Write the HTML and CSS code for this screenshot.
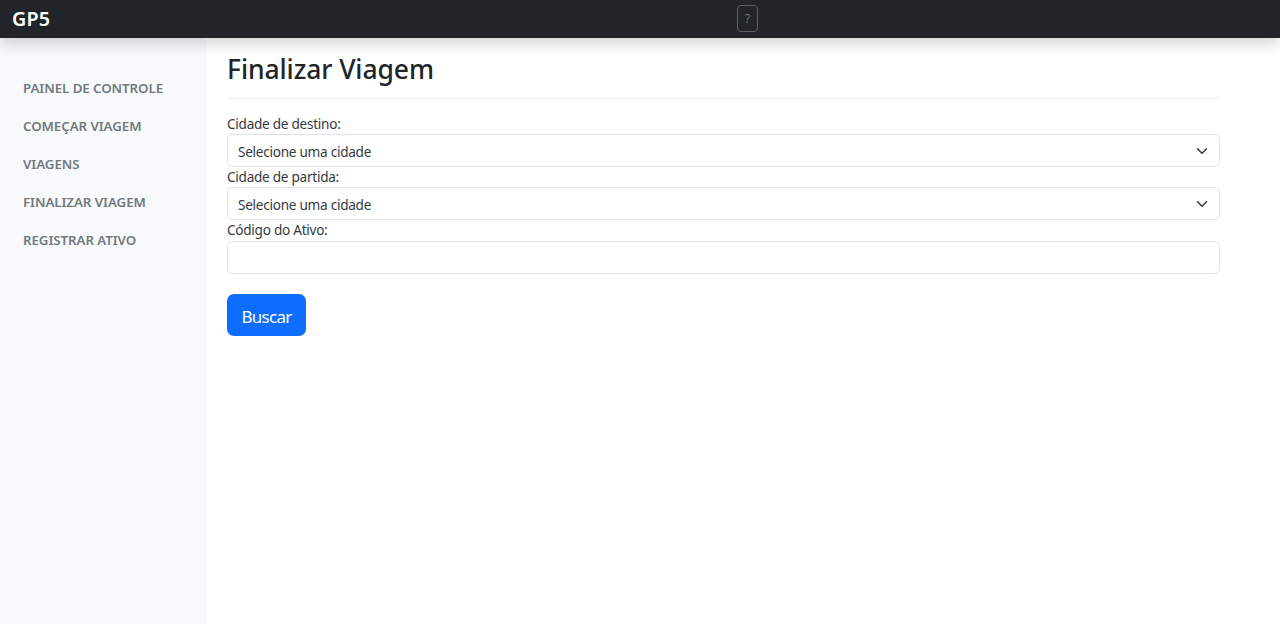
FILE: index.html
```html
<!DOCTYPE html>
<html lang="pt-BR">
<head>
<meta charset="utf-8">
<title>Finalizar Viagem</title>
<link rel="stylesheet" href="styles.css">
</head>
<body>
<header class="navbar">
  <a class="brand">GP5</a>
  <button class="help" type="button">?</button>
</header>
<div class="layout">
  <nav class="sidebar">
    <a class="nav-link">Painel de controle</a>
    <a class="nav-link">Começar viagem</a>
    <a class="nav-link">Viagens</a>
    <a class="nav-link">Finalizar viagem</a>
    <a class="nav-link">Registrar ativo</a>
  </nav>
  <main class="content">
    <div class="heading"><h1>Finalizar Viagem</h1></div>
    <form class="form">
      <div class="label">Cidade de destino:</div>
      <div class="control">
        <span>Selecione uma cidade</span>
        <svg class="chevron" viewBox="0 0 16 16"><path d="m2 5 6 6 6-6"/></svg>
      </div>
      <div class="label">Cidade de partida:</div>
      <div class="control">
        <span>Selecione uma cidade</span>
        <svg class="chevron" viewBox="0 0 16 16"><path d="m2 5 6 6 6-6"/></svg>
      </div>
      <div class="label">Código do Ativo:</div>
      <input class="control" type="text" aria-label="Código do Ativo">
      <button class="submit" type="button">Buscar</button>
    </form>
  </main>
</div>
</body>
</html>
```
FILE: styles.css
```css
* { box-sizing: border-box; }

body {
  margin: 0;
  height: 624px;
  overflow: hidden;
  display: flex;
  flex-direction: column;
  background: #fff;
  color: #212529;
  font-family: "Noto Sans", "Open Sans", sans-serif;
  font-size: 13.6px;
  letter-spacing: -0.27px;
}

.navbar {
  position: relative;
  z-index: 1;
  flex: none;
  height: 37.6px;
  padding: 0 12px;
  display: flex;
  align-items: center;
  background: #212529;
  box-shadow: 0 7px 14px rgba(0, 0, 0, 0.15);
}

.brand {
  width: 725px;
  color: #fff;
  font-size: 19.7px;
  font-weight: 600;
  line-height: 38px;
  letter-spacing: 0.2px;
}

.help {
  width: 21px;
  height: 27px;
  margin-bottom: 1.4px;
  padding: 0;
  border: 1px solid #5d6164;
  border-radius: 4px;
  background: transparent;
  color: #6c7074;
  font: 12px "Noto Sans", sans-serif;
}

.layout {
  flex: 1;
  display: flex;
}

.sidebar {
  flex: none;
  width: 206px;
  padding: 31.4px 23px 0;
  background: #f8f9fa;
}

.nav-link {
  display: block;
  height: 38.1px;
  line-height: 38.1px;
  color: #727980;
  font-size: 13.3px;
  font-weight: 600;
  letter-spacing: -0.06px;
  white-space: nowrap;
  text-transform: uppercase;
}

.content {
  flex: 1;
  padding: 0 60px 0 21px;
}

.heading {
  height: 61.6px;
  padding-top: 14px;
  border-bottom: 1px solid #eceef0;
}

h1 {
  margin: 0;
  font-size: 26.5px;
  line-height: 35.6px;
  font-weight: 500;
  letter-spacing: -0.1px;
}

.form {
  padding-top: 14.6px;
  color: #343a40;
}

.label {
  height: 20.3px;
  line-height: 20.8px;
}

.control {
  display: flex;
  align-items: center;
  justify-content: space-between;
  width: 100%;
  height: 33px;
  padding: 1px 11px 0 10px;
  border: 1px solid #dee2e6;
  border-radius: 5px;
  background: #fff;
}

.chevron {
  width: 12px;
  height: 12px;
  margin-top: -1px;
  fill: none;
  stroke: #343a40;
  stroke-width: 2;
  stroke-linecap: round;
  stroke-linejoin: round;
}

.submit {
  display: block;
  width: 79px;
  height: 42px;
  margin-top: 20.6px;
  padding: 2px 0 0;
  border: 0;
  border-radius: 7px;
  background: #0d6efd;
  color: #fff;
  font: 17px "Noto Sans", sans-serif;
  letter-spacing: -0.7px;
}
```
